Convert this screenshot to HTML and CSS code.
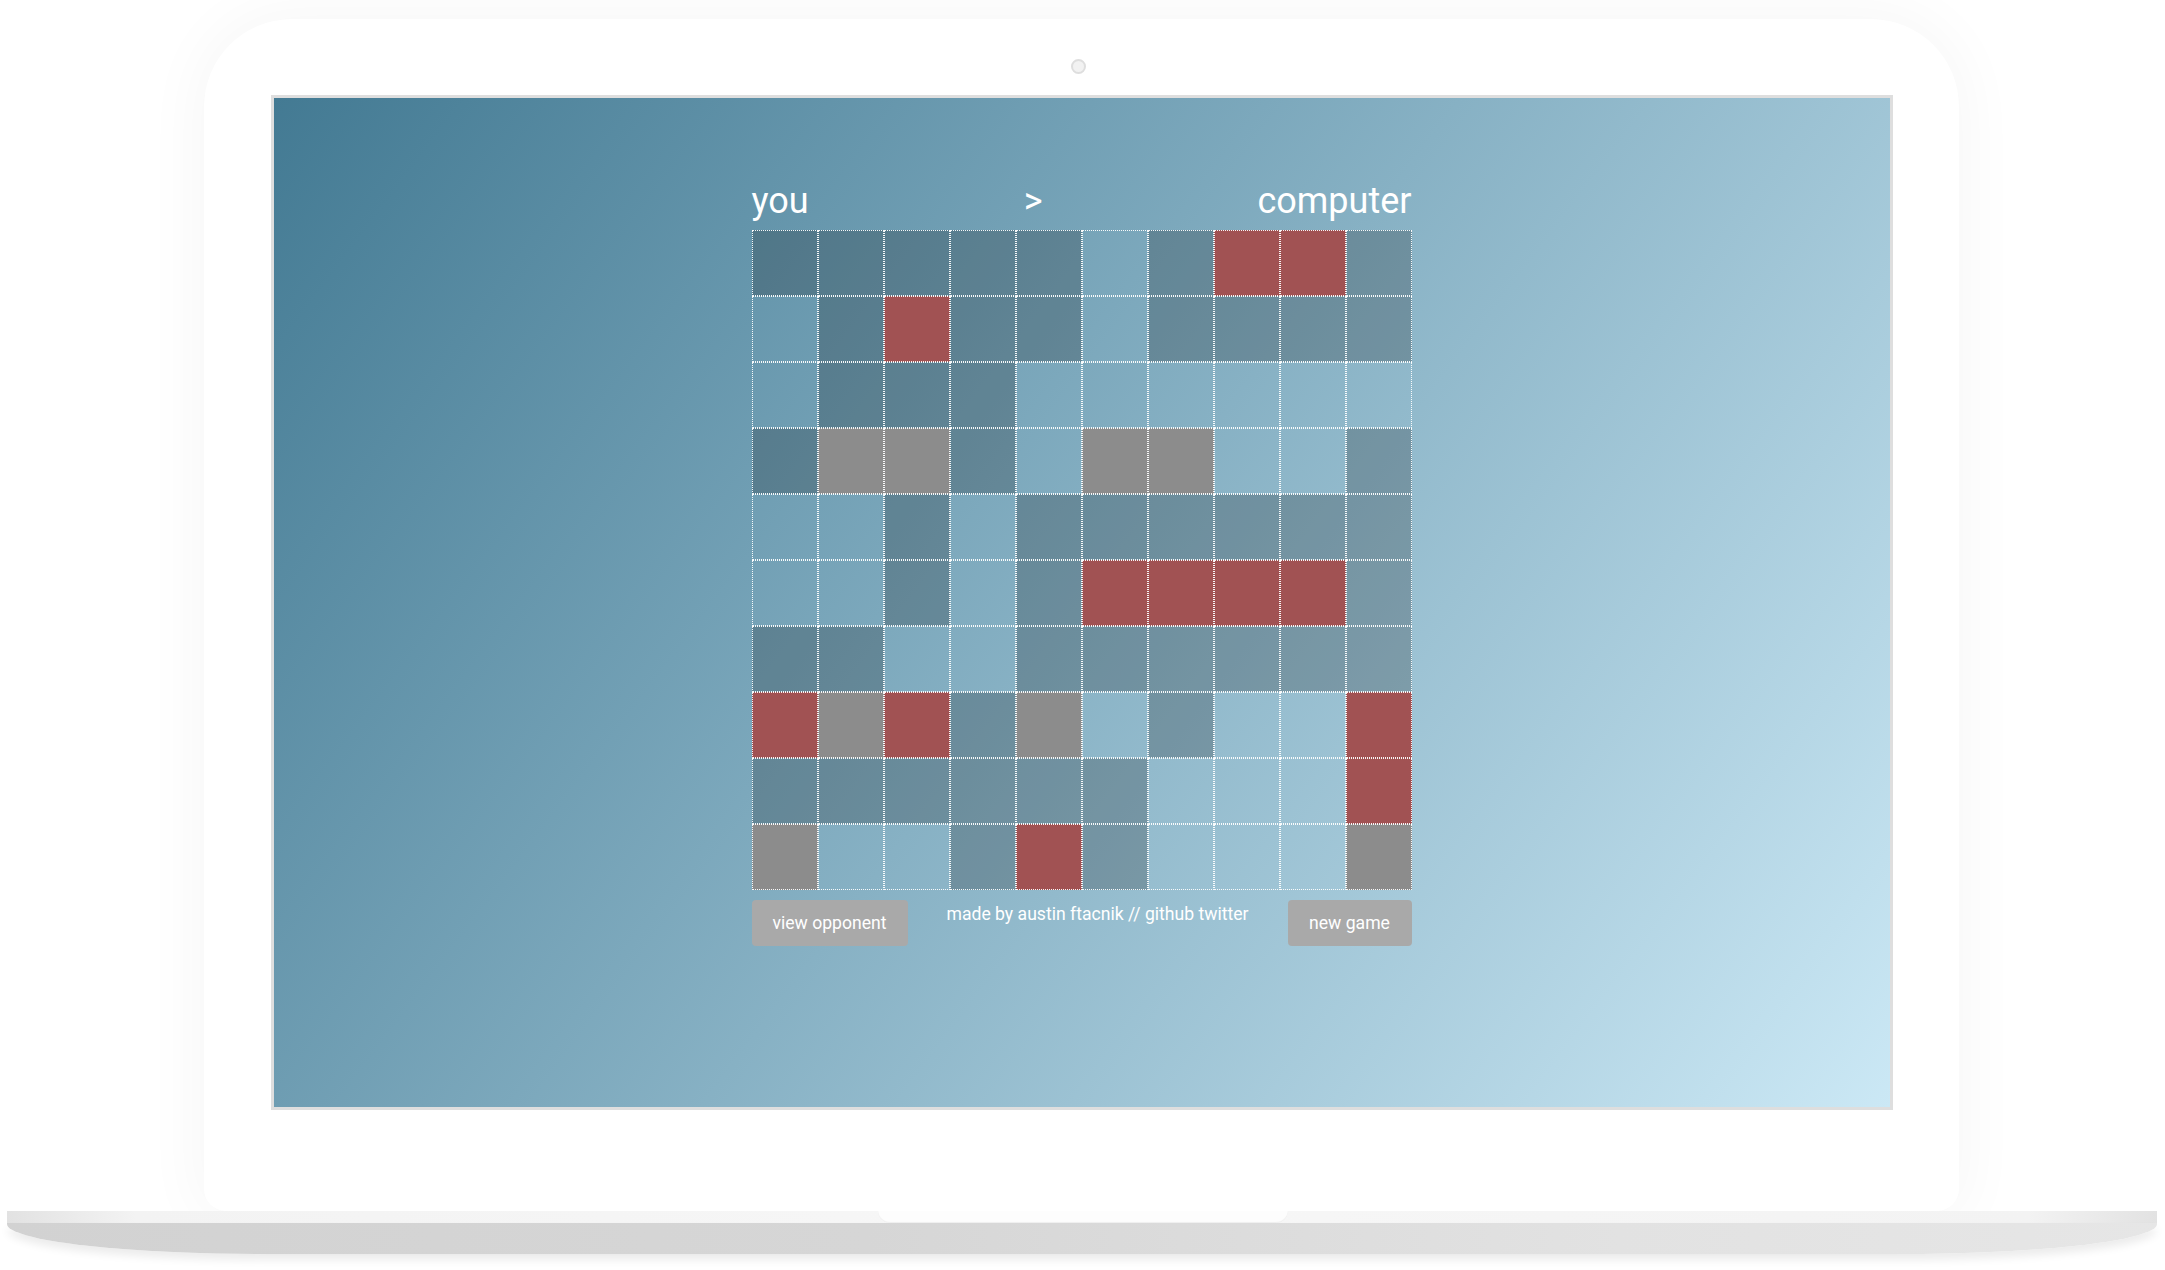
FILE: index.html
```html
<!DOCTYPE html>
<html lang="en">
<head>
<meta charset="utf-8">
<title>battleship</title>
<link rel="stylesheet" href="styles.css">
</head>
<body>
<div class="page">
  <div class="lid">
    <div class="camera"></div>
    <div class="screen">
      <div class="game">
        <div class="header">
          <span>you</span>
          <span>&gt;</span>
          <span>computer</span>
        </div>
        <div class="board">
          <div class="c d"></div><div class="c d"></div><div class="c d"></div><div class="c d"></div><div class="c d"></div><div class="c"></div><div class="c d"></div><div class="c h"></div><div class="c h"></div><div class="c d"></div>
          <div class="c"></div><div class="c d"></div><div class="c h"></div><div class="c d"></div><div class="c d"></div><div class="c"></div><div class="c d"></div><div class="c d"></div><div class="c d"></div><div class="c d"></div>
          <div class="c"></div><div class="c d"></div><div class="c d"></div><div class="c d"></div><div class="c"></div><div class="c"></div><div class="c"></div><div class="c"></div><div class="c"></div><div class="c"></div>
          <div class="c d"></div><div class="c m"></div><div class="c m"></div><div class="c d"></div><div class="c"></div><div class="c m"></div><div class="c m"></div><div class="c"></div><div class="c"></div><div class="c d"></div>
          <div class="c"></div><div class="c"></div><div class="c d"></div><div class="c"></div><div class="c d"></div><div class="c d"></div><div class="c d"></div><div class="c d"></div><div class="c d"></div><div class="c d"></div>
          <div class="c"></div><div class="c"></div><div class="c d"></div><div class="c"></div><div class="c d"></div><div class="c h"></div><div class="c h"></div><div class="c h"></div><div class="c h"></div><div class="c d"></div>
          <div class="c d"></div><div class="c d"></div><div class="c"></div><div class="c"></div><div class="c d"></div><div class="c d"></div><div class="c d"></div><div class="c d"></div><div class="c d"></div><div class="c d"></div>
          <div class="c h"></div><div class="c m"></div><div class="c h"></div><div class="c d"></div><div class="c m"></div><div class="c"></div><div class="c d"></div><div class="c"></div><div class="c"></div><div class="c h"></div>
          <div class="c d"></div><div class="c d"></div><div class="c d"></div><div class="c d"></div><div class="c d"></div><div class="c d"></div><div class="c"></div><div class="c"></div><div class="c"></div><div class="c h"></div>
          <div class="c m"></div><div class="c"></div><div class="c"></div><div class="c d"></div><div class="c h"></div><div class="c d"></div><div class="c"></div><div class="c"></div><div class="c"></div><div class="c m"></div>
        </div>
        <div class="footer">
          <button class="btn btn-view">view opponent</button>
          <p class="credit">made by austin ftacnik // <a href="#">github</a> <a href="#">twitter</a></p>
          <button class="btn btn-new">new game</button>
        </div>
      </div>
    </div>
  </div>
  <div class="base">
    <div class="base-top"><div class="notch"></div></div>
    <div class="base-bottom"></div>
  </div>
</div>
</body>
</html>
```

FILE: styles.css
```css
* { box-sizing: border-box; }

html, body {
  margin: 0;
  padding: 0;
  background: #ffffff;
}

.page {
  width: 2165px;
  height: 1270px;
  overflow: hidden;
  padding-top: 19px;
  background: #ffffff;
  font-family: Roboto, "Liberation Sans", Arial, sans-serif;
}

.lid {
  margin-left: 204px;
  width: 1755px;
  height: 1192px;
  background: #ffffff;
  border-radius: 88px 88px 22px 22px;
  box-shadow: 0 0 60px 8px rgba(0, 0, 0, 0.035);
  display: flex;
  flex-direction: column;
  align-items: center;
  position: relative;
  z-index: 1;
}

.camera {
  margin-top: 40px;
  margin-left: -6px;
  width: 15px;
  height: 15px;
  border-radius: 50%;
  background: #f2f2f2;
  border: 2px solid #dedede;
}

.screen {
  margin-top: 21px;
  width: 1622px;
  height: 1015px;
  border: 3px solid #dedede;
  background: linear-gradient(127deg, #437a93 0%, #cbe8f5 100%);
  display: flex;
  justify-content: center;
}

.game {
  width: 660px;
  padding-top: 85px;
  display: flex;
  flex-direction: column;
}

.header {
  display: flex;
  justify-content: space-between;
  color: #ffffff;
  font-size: 36px;
  line-height: 36px;
  font-weight: 400;
  margin-bottom: 11px;
}

.board {
  display: grid;
  grid-template-columns: repeat(10, 66px);
  grid-auto-rows: 66px;
}

.c {
  border: 1px dotted rgba(255, 255, 255, 0.95);
  background: transparent;
}
.c.d { background: rgba(0, 0, 0, 0.2); }
.c.h { background: #a15253; }
.c.m { background: #8c8c8c; }

.footer {
  margin-top: 10px;
  display: flex;
  justify-content: space-between;
  align-items: flex-start;
}

.btn {
  height: 46px;
  border: none;
  border-radius: 4px;
  background: #a9a9a9;
  color: #ffffff;
  font-family: Roboto, "Liberation Sans", Arial, sans-serif;
  font-size: 17.6px;
  padding: 0;
}
.btn-view { width: 156px; }
.btn-new { width: 124px; }

.credit {
  margin: 4px 0 0;
  color: #ffffff;
  font-size: 17.6px;
  line-height: 20px;
}
.credit a {
  color: #ffffff;
  text-decoration: none;
}

.base {
  margin-left: 7px;
  width: 2150px;
  position: relative;
  z-index: 2;
}

.base-top {
  height: 12px;
  background: linear-gradient(to right, #e2e2e2 0%, #f3f3f3 6%, #f7f7f7 50%, #f3f3f3 94%, #e2e2e2 100%);
  display: flex;
  justify-content: center;
}

.notch {
  width: 410px;
  height: 12px;
  margin-left: 2px;
  background: #fdfdfd;
  border-radius: 0 0 14px 14px;
  box-shadow: inset 0 -1px 1px rgba(0, 0, 0, 0.06);
}

.base-bottom {
  height: 31px;
  background: linear-gradient(to right, #d2d2d2 0%, #d6d6d6 40%, #e2e2e2 75%, #e6e6e6 100%);
  border-radius: 0 0 260px 260px / 0 0 30px 30px;
  box-shadow: 0 6px 8px rgba(0, 0, 0, 0.08);
}
```
